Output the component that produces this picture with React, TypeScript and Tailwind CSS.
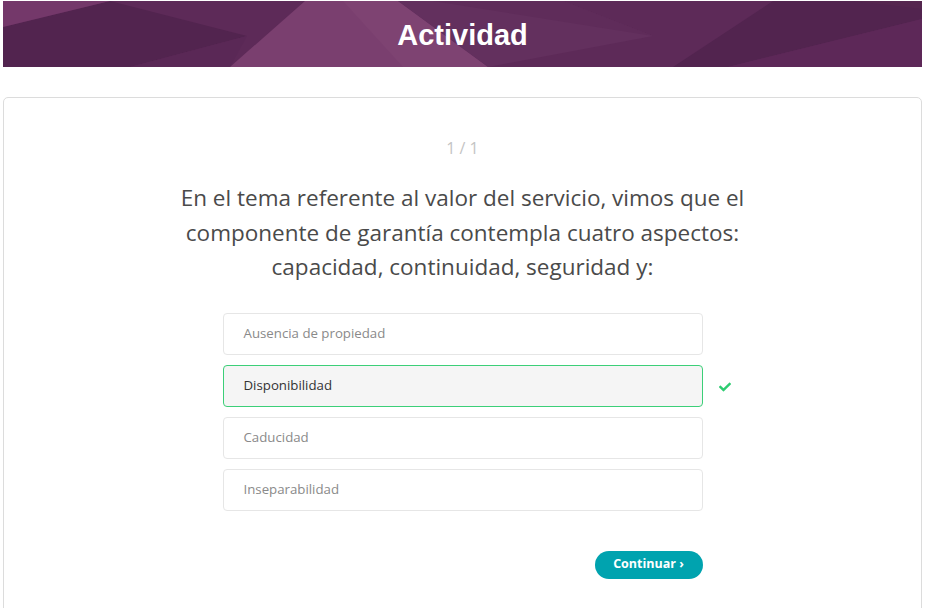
import { FaCheck } from "react-icons/fa";

const OPTIONS = [
  { label: "Ausencia de propiedad", correct: false },
  { label: "Disponibilidad", correct: true },
  { label: "Caducidad", correct: false },
  { label: "Inseparabilidad", correct: false },
];

function HeaderBackground() {
  return (
    <svg
      className="absolute inset-0 h-full w-full"
      viewBox="0 0 919 66"
      preserveAspectRatio="none"
    >
      <rect width="919" height="66" fill="#5d2a58" />
      {/* left dark slab */}
      <polygon points="0,26 107,0 244,35 127,66 0,66" fill="#52244f" />
      {/* top-left light strip */}
      <polygon points="0,0 107,0 0,26" fill="#74386a" />
      {/* bottom left medium */}
      <polygon points="127,66 244,35 227,66" fill="#5a2856" />
      {/* big light wedge */}
      <polygon points="227,66 302,0 395,0 485,66" fill="#7a3f6f" />
      <polygon points="340,0 395,0 485,66 400,66" fill="#7e4372" />
      {/* light triangle pointing right */}
      <polygon points="395,0 560,0 650,35 485,66" fill="#63305e" />
      <polygon points="430,0 560,0 650,35" fill="#5f2c5a" />
      {/* right dark area */}
      <polygon points="670,66 770,0 919,0 919,18 725,66" fill="#52244f" />
      <polygon points="725,66 919,18 919,66" fill="#5d2858" />
      <polygon points="850,0 919,0 919,8" fill="#55264f" />
    </svg>
  );
}

export default function App() {
  return (
    <div className="min-h-screen bg-white pt-[1px] font-['Open_Sans',sans-serif]">
      <div className="ml-[3px] w-[919px]">
        {/* Banner */}
        <div className="relative flex h-[66px] items-center justify-center overflow-hidden pt-[3px]">
          <HeaderBackground />
          <h1 className="relative font-['Liberation_Sans',Arial,sans-serif] text-[29px] font-bold text-white">
            Actividad
          </h1>
        </div>

        {/* Activity card */}
        <div className="mt-[30px] h-[540px] rounded-[5px] border border-[#dcdcdc] bg-white pt-[38px]">
          <div className="flex flex-col items-center">
            <p className="text-[16px] leading-[24px] text-[#c4c4c4]">1 / 1</p>

            <p className="mt-[21px] whitespace-nowrap text-center text-[22.5px] leading-[34.5px] text-[#4a4a4a]">
              En el tema referente al valor del servicio, vimos que el
              <br />
              componente de garantía contempla cuatro aspectos:
              <br />
              capacidad, continuidad, seguridad y:
            </p>

            <div className="mt-[28px] flex w-[480px] flex-col gap-[10px]">
              {OPTIONS.map((opt) => (
                <div key={opt.label} className="relative">
                  <div
                    className={`flex h-[42px] items-center rounded-[4px] border px-[20px] text-[13.25px] ${
                      opt.correct
                        ? "border-[#3ccf78] bg-[#f5f5f5] text-[#333333]"
                        : "border-[#e6e6e6] bg-white text-[#8a8a8a]"
                    }`}
                  >
                    {opt.label}
                  </div>
                  {opt.correct && (
                    <FaCheck className="absolute left-[496px] top-[16px] text-[12px] text-[#2ecc71]" />
                  )}
                </div>
              ))}
            </div>

            <div className="mt-[40px] flex w-[480px] justify-end">
              <button className="h-[28px] w-[108px] rounded-full bg-[#00a3af] text-[12.5px] font-bold text-white">
                Continuar ›
              </button>
            </div>
          </div>
        </div>
      </div>
    </div>
  );
}
